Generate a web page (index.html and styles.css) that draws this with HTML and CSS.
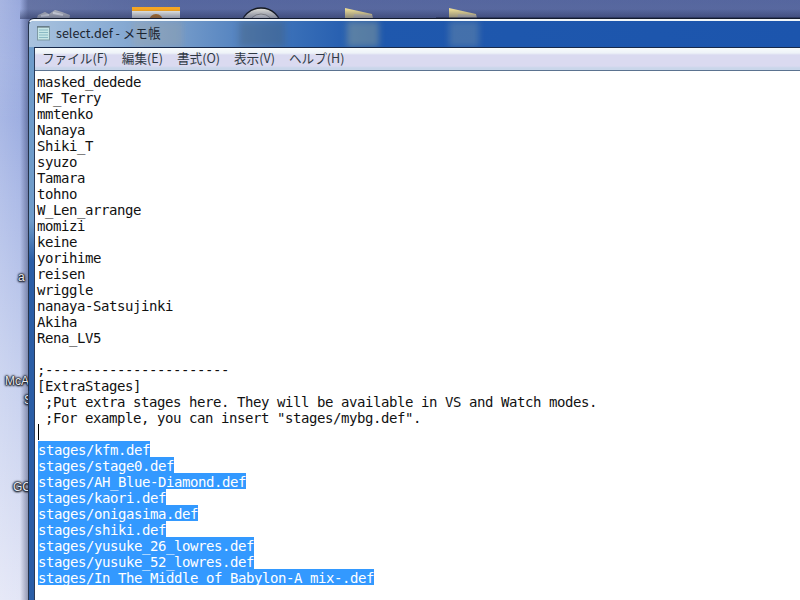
FILE: index.html
```html
<!DOCTYPE html>
<html lang="ja">
<head>
<meta charset="utf-8">
<title>select.def - メモ帳</title>
<link rel="stylesheet" href="styles.css">
</head>
<body>
<div class="desktop">
  <svg class="deskicon bin" viewBox="0 0 36 12"><path d="M1 12 L3 6 L10 3 L14 5 L20 1 L27 3 L35 6 L34 12Z" fill="#b9bcc4"/><path d="M6 7 L14 6 M18 4 L28 6" stroke="#eef0f4" stroke-width="2"/></svg>
  <svg class="deskicon sun" viewBox="0 0 48 14"><rect width="48" height="14" fill="#eef0ec"/><rect width="48" height="4" fill="#f5a623"/><circle cx="24" cy="14" r="7" fill="#c97a1a"/></svg>
  <svg class="deskicon disc" viewBox="0 0 42 13"><ellipse cx="21" cy="20" rx="20" ry="19" fill="#d8d8d4" stroke="#14181f" stroke-width="1.5"/><ellipse cx="21" cy="20" rx="13" ry="13" fill="#eeeeea" stroke="#9a9a94"/></svg>
  <svg class="deskicon folder one" viewBox="0 0 30 12"><path d="M1 0 L28 6 L29 12 L1 12Z" fill="#ecdc95"/><path d="M10 6 L28 7 L29 12 L9 12Z" fill="#d8d0b8"/></svg>
  <svg class="deskicon folder two" viewBox="0 0 30 12"><path d="M1 0 L28 6 L29 12 L1 12Z" fill="#ecdc95"/><path d="M10 6 L28 7 L29 12 L9 12Z" fill="#d8d0b8"/></svg>
  <div class="topshade"></div>
  <div class="shadowbar"></div>
  <span class="desklabel la">a</span>
  <span class="desklabel lb">McA</span>
  <span class="desklabel lc">S</span>
  <span class="desklabel ld">GC</span>

  <div class="window">
    <div class="titlebar">
      <i class="glow g1"></i><i class="glow g2"></i><i class="glow g3"></i><i class="glow g4"></i>
      <svg class="noteicon" viewBox="0 0 16 16">
        <rect x="1.5" y="1.5" width="12" height="13.5" fill="#c6e6e6" stroke="#7f9aa5"/>
        <path d="M3 5H12M3 7.5H12M3 10H12M3 12.5H12" stroke="#8ab9c4"/>
        <path d="M2 1V3M4 1V3M6 1V3M8 1V3M10 1V3M12 1V3" stroke="#50606c"/>
      </svg>
      <span class="title">select.def - メモ帳</span>
    </div>
    <div class="client">
      <div class="menubar">
        <span>ファイル(F)</span><span>編集(E)</span><span>書式(O)</span><span>表示(V)</span><span>ヘルプ(H)</span>
      </div>
      <div class="editor">
<pre class="line">masked_dedede</pre>
<pre class="line">MF_Terry</pre>
<pre class="line">mmtenko</pre>
<pre class="line">Nanaya</pre>
<pre class="line">Shiki_T</pre>
<pre class="line">syuzo</pre>
<pre class="line">Tamara</pre>
<pre class="line">tohno</pre>
<pre class="line">W_Len_arrange</pre>
<pre class="line">momizi</pre>
<pre class="line">keine</pre>
<pre class="line">yorihime</pre>
<pre class="line">reisen</pre>
<pre class="line">wriggle</pre>
<pre class="line">nanaya-Satsujinki</pre>
<pre class="line">Akiha</pre>
<pre class="line">Rena_LV5</pre>
<pre class="line"> </pre>
<pre class="line">;-----------------------</pre>
<pre class="line">[ExtraStages]</pre>
<pre class="line"> ;Put extra stages here. They will be available in VS and Watch modes.</pre>
<pre class="line"> ;For example, you can insert "stages/mybg.def".</pre>
<pre class="line caretline"><i class="caret"></i></pre>
<pre class="line"><span class="sel">stages/kfm.def</span></pre>
<pre class="line"><span class="sel">stages/stage0.def</span></pre>
<pre class="line"><span class="sel">stages/AH_Blue-Diamond.def</span></pre>
<pre class="line"><span class="sel">stages/kaori.def</span></pre>
<pre class="line"><span class="sel">stages/onigasima.def</span></pre>
<pre class="line"><span class="sel">stages/shiki.def</span></pre>
<pre class="line"><span class="sel">stages/yusuke_26_lowres.def</span></pre>
<pre class="line"><span class="sel">stages/yusuke_52_lowres.def</span></pre>
<pre class="line"><span class="sel">stages/In The Middle of Babylon-A mix-.def</span></pre>
      </div>
    </div>
  </div>
</div>
</body>
</html>
```
FILE: styles.css
```css
html, body {
  margin: 0;
  padding: 0;
  height: 100%;
  overflow: hidden;
}

.desktop {
  position: relative;
  width: 800px;
  height: 600px;
  overflow: hidden;
  background:
    linear-gradient(90deg, rgba(30, 40, 80, 0) 20px, rgba(30, 40, 80, .4) 28px),
    radial-gradient(ellipse 180px 120px at 0 0, rgba(255, 255, 255, .22), rgba(255, 255, 255, 0)),
    linear-gradient(90deg, rgba(255, 255, 255, .15), rgba(255, 255, 255, 0) 28px),
    linear-gradient(180deg, #7b90d3 0, #8fa2dc 60px, #a9b8e6 200px, #c5cfee 380px, #e2e5f6 600px);
}

.deskicon {
  position: absolute;
  display: block;
}
.bin { left: 35px; top: 9px; width: 36px; height: 12px; }
.sun { left: 132px; top: 7px; width: 48px; height: 14px; }
.disc { left: 240px; top: 7px; width: 42px; height: 13px; }
.folder { top: 8px; width: 30px; height: 12px; }
.folder.one { left: 344px; }
.folder.two { left: 448px; }

.topshade {
  position: absolute;
  left: 20px;
  right: 0;
  top: 9px;
  height: 10px;
  background: linear-gradient(180deg, rgba(40, 50, 90, 0), rgba(40, 50, 90, .55));
}

.shadowbar {
  position: absolute;
  left: 436px;
  right: 0;
  top: 17px;
  height: 2px;
  background: linear-gradient(180deg, rgba(20, 30, 70, .3), #1a2238);
}

.desklabel {
  position: absolute;
  font: 12px/13px "Liberation Sans", sans-serif;
  color: #e8eaf0;
  text-shadow: 0 0 1px #14171f, 0 0 2px #14171f, 0 0 2px #14171f, 0 0 3px #14171f, 0 1px 2px #14171f;
}
.la { left: 18px; top: 271px; }
.lb { left: 5px; top: 375px; }
.lc { left: 24px; top: 394px; }
.ld { left: 13px; top: 481px; }

.window {
  position: absolute;
  left: 28px;
  top: 19px;
  width: 772px;
  height: 581px;
  box-sizing: border-box;
  display: flex;
  flex-direction: column;
  border-top: 2px solid #f0f6fa;
  border-left: 1px solid #26344c;
  box-shadow: 0 -1px 0 #141c2e;
  border-top-left-radius: 6px;
  background: linear-gradient(180deg, #6f9cca 0, #6f9cca 200px, #2a5da6 240px, #2a5da6 100%);
  padding-left: 5px;
}

.titlebar {
  position: relative;
  height: 26px;
  margin-left: -5px;
  padding-left: 7px;
  padding-bottom: 2px;
  box-sizing: border-box;
  flex: none;
  display: flex;
  align-items: center;
  gap: 4px;
  background: linear-gradient(90deg, #a9c2de 0, #8fb0d6 70px, #6f97c8 160px, #3a70b8 260px, #1f58ad 340px, #1c55ad 100%);
  overflow: hidden;
  border-top-left-radius: 5px;
}

.glow {
  position: absolute;
  top: 0;
  bottom: 0;
  filter: blur(3px);
}
.g1 { left: 210px; width: 46px; background: rgba(70, 90, 110, .35); }
.g2 { left: 318px; width: 32px; background: rgba(170, 180, 150, .4); }
.g3 { left: 420px; width: 30px; background: rgba(140, 160, 170, .35); }
.g4 { left: 104px; width: 50px; background: rgba(190, 170, 130, .2); }

.noteicon {
  position: relative;
  width: 16px;
  height: 16px;
  flex: none;
}

.title {
  position: relative;
  font: 12.6px/16px "Noto Sans CJK JP", sans-serif;
  color: #1b2530;
}

.client {
  flex: 1;
  min-height: 0;
  display: flex;
  flex-direction: column;
  border-left: 1px solid #2a3a58;
  border-top: 1px solid #17294a;
  background: #fff;
}

.menubar {
  flex: none;
  height: 23px;
  box-sizing: border-box;
  display: flex;
  align-items: center;
  gap: 14px;
  padding-left: 7px;
  padding-bottom: 3px;
  border-bottom: 1px solid #5b7390;
  background: linear-gradient(180deg, #f8fbfc 0, #eef3f8 5px, #dadaf0 7px, #dadaf0 18px, #c9d6ea 20px);
  font: 12.6px/16px "Noto Sans CJK JP", sans-serif;
  color: #2f3944;
}

.editor {
  flex: 1;
  min-height: 0;
  overflow: hidden;
  padding: 2px 0 0 2px;
  background: #fff;
}

.line {
  margin: 0;
  height: 16px;
  font: 14px/18px "DejaVu Sans Mono", "Liberation Mono", monospace;
  letter-spacing: -0.43px;
  color: #111;
  white-space: pre;
}

.caretline {
  position: relative;
}

.caret {
  position: absolute;
  left: 1px;
  top: -1px;
  width: 1px;
  height: 16px;
  background: #000;
}

.sel {
  display: block;
  width: fit-content;
  height: 16px;
  margin-left: 1px;
  background: #3399ff;
  color: #fff;
}
```
